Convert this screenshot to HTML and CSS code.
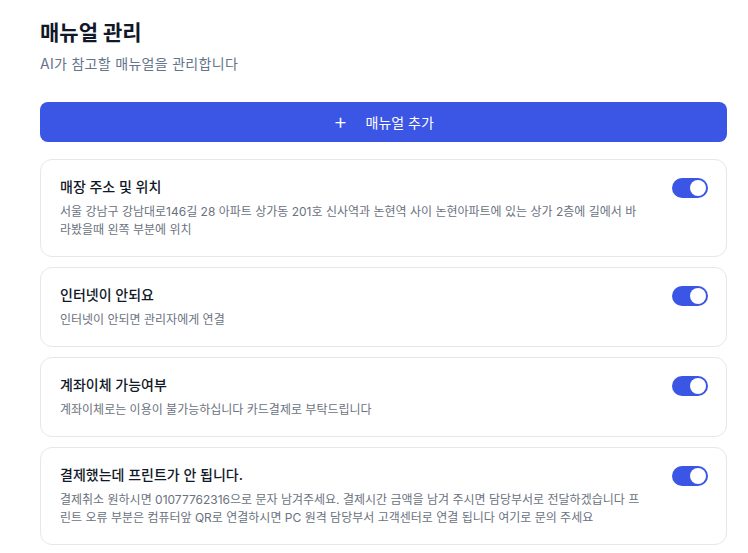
FILE: index.html
```html
<!DOCTYPE html>
<html lang="ko">
<head>
  <meta charset="UTF-8" />
  <meta name="viewport" content="width=device-width, initial-scale=1" />
  <title>매뉴얼 관리</title>
  <link rel="stylesheet" href="styles.css">
</head>
<body>
  <main class="page">
    <h1>매뉴얼 관리</h1>
    <p class="sub">AI가 참고할 매뉴얼을 관리합니다</p>

    <button class="add-btn"><span class="plus">+</span> 매뉴얼 추가</button>

    <div class="list">
      <div class="card">
        <div class="card-body">
          <div class="card-title">매장 주소 및 위치</div>
          <div class="card-desc">서울 강남구 강남대로146길 28 아파트 상가동 201호 신사역과 논현역 사이 논현아파트에 있는 상가 2층에 길에서 바라봤을때 왼쪽 부분에 위치</div>
        </div>
        <span class="toggle on"><span class="knob"></span></span>
      </div>

      <div class="card">
        <div class="card-body">
          <div class="card-title">인터넷이 안되요</div>
          <div class="card-desc">인터넷이 안되면 관리자에게 연결</div>
        </div>
        <span class="toggle on"><span class="knob"></span></span>
      </div>

      <div class="card">
        <div class="card-body">
          <div class="card-title">계좌이체 가능여부</div>
          <div class="card-desc">계좌이체로는 이용이 불가능하십니다 카드결제로 부탁드립니다</div>
        </div>
        <span class="toggle on"><span class="knob"></span></span>
      </div>

      <div class="card">
        <div class="card-body">
          <div class="card-title">결제했는데 프린트가 안 됩니다.</div>
          <div class="card-desc">결제취소 원하시면 01077762316으로 문자 남겨주세요. 결제시간 금액을 남겨 주시면 담당부서로 전달하겠습니다 프린트 오류 부분은 컴퓨터앞 QR로 연결하시면 PC 원격 담당부서 고객센터로 연결 됩니다 여기로 문의 주세요</div>
        </div>
        <span class="toggle on"><span class="knob"></span></span>
      </div>
    </div>
  </main>
</body>
</html>
```

FILE: styles.css
```css
body {
  margin: 0;
  background: #ffffff;
  font-family: 'Inter', 'Noto Sans CJK KR', sans-serif;
  color: #111827;
}

.page {
  padding: 19px 21px 0 40px;
}

h1 {
  margin: 0;
  font-size: 21px;
  line-height: 28px;
  font-weight: 700;
  color: #111827;
}

.sub {
  margin: 7px 0 0;
  font-size: 14px;
  line-height: 20px;
  letter-spacing: 0.3px;
  color: #64748b;
}

.add-btn {
  display: flex;
  align-items: center;
  justify-content: center;
  gap: 18px;
  width: 100%;
  height: 40px;
  margin-top: 28px;
  border: none;
  border-radius: 8px;
  background: #3b55e4;
  color: #ffffff;
  font-family: inherit;
  font-size: 14px;
  font-weight: 400;
  cursor: pointer;
}

.plus {
  font-size: 22px;
  font-weight: 300;
  line-height: 1;
  margin-top: -2px;
}

.list {
  display: flex;
  flex-direction: column;
  gap: 10px;
  margin-top: 17px;
}

.card {
  display: flex;
  align-items: flex-start;
  gap: 26px;
  padding: 17px 18px 17px 19px;
  border: 1px solid #e5e7eb;
  border-radius: 12px;
}

.card-body {
  flex: 1;
  min-width: 0;
}

.card-title {
  font-size: 14px;
  line-height: 20px;
  font-weight: 500;
  color: #111827;
}

.card-desc {
  margin-top: 6px;
  font-size: 12px;
  line-height: 18px;
  color: #6b7280;
}

/* 토글 */
.toggle {
  position: relative;
  flex: none;
  width: 36px;
  height: 20px;
  margin-top: 1px;
  border-radius: 10px;
  background: #d1d5db;
}

.toggle.on {
  background: #3b55e4;
}

.knob {
  position: absolute;
  top: 2px;
  left: 2px;
  width: 16px;
  height: 16px;
  border-radius: 50%;
  background: #ffffff;
}

.toggle.on .knob {
  left: 18px;
}
```
